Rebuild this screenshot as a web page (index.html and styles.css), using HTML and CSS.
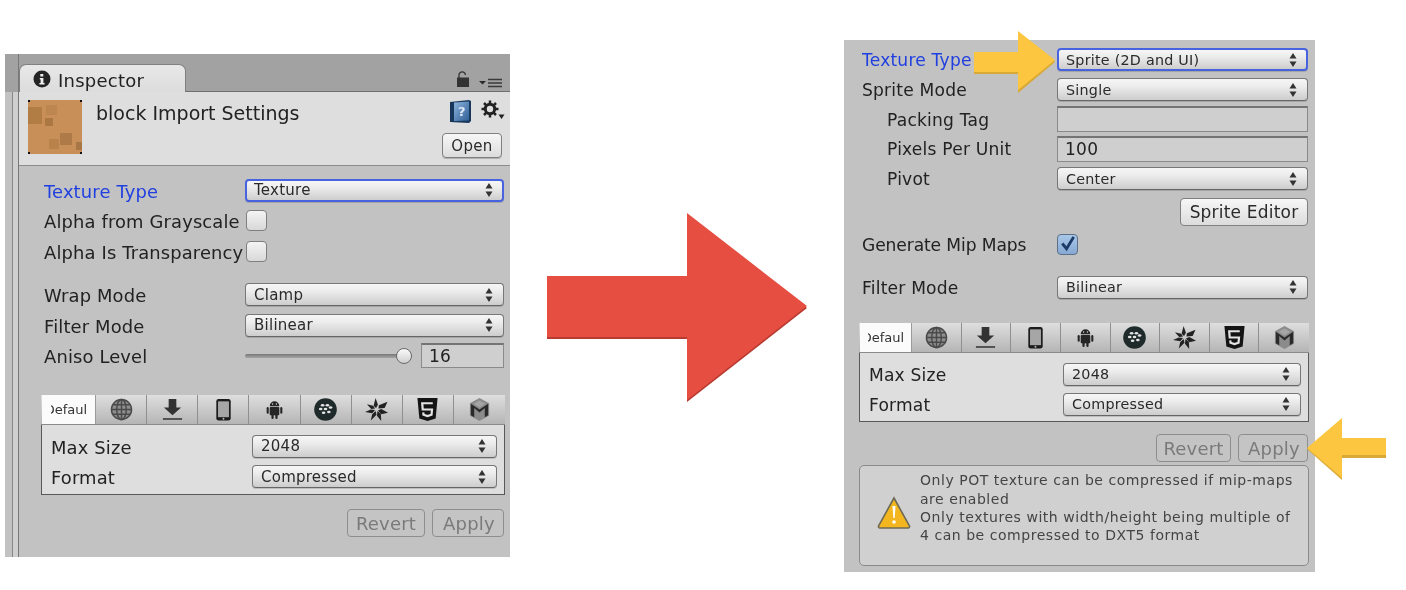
FILE: index.html
```html
<!DOCTYPE html>
<html lang="en">
<head>
<meta charset="utf-8">
<title>Inspector import settings</title>
<link rel="stylesheet" href="styles.css">
</head>
<body>
<svg class="defs" width="0" height="0" aria-hidden="true">
  <defs>
    <linearGradient id="bookfill" x1="0" y1="0" x2="1" y2="1"><stop offset="0" stop-color="#8db4dc"/><stop offset="1" stop-color="#2f5f97"/></linearGradient>
  </defs>
  <symbol id="i-updown" viewBox="0 0 8 14"><path d="M4 0 7.5 5.500H.5zM4 14 .5 8.500h7z" fill="#333"/></symbol>
  <symbol id="i-globe" viewBox="0 0 24 24"><g fill="none" stroke="#4a4a4a" stroke-width="1.500"><circle cx="12" cy="12" r="10.500" fill="#8d8d8d"/><ellipse cx="12" cy="12" rx="5" ry="10.500"/><path d="M12 1.500v21M1.500 12h21M3 7h18M3 17h18"/></g></symbol>
  <symbol id="i-down" viewBox="0 0 24 24"><path d="M8 1h8v9h5l-9 8-9-8h5z" fill="#333"/><rect x="2" y="21" width="20" height="1.800" fill="#444"/></symbol>
  <symbol id="i-phone" viewBox="0 0 24 24"><rect x="4.500" y="1" width="15" height="22.500" rx="2.500" fill="#1c1c1c"/><rect x="6.300" y="3.500" width="11.400" height="16.500" fill="#a6a6a6"/><circle cx="12" cy="21.700" r="1" fill="#bbb"/></symbol>
  <symbol id="i-android" viewBox="0 0 24 24"><g fill="#262626"><path d="M7 8.500a5 5 0 0 1 10 0z"/><rect x="7" y="9.500" width="10" height="8.500" rx="1"/><rect x="3.800" y="9.500" width="2.200" height="7" rx="1.100"/><rect x="18" y="9.500" width="2.200" height="7" rx="1.100"/><rect x="8.800" y="17" width="2.300" height="5" rx="1.100"/><rect x="12.900" y="17" width="2.300" height="5" rx="1.100"/></g><circle cx="10" cy="6.300" r=".7" fill="#ddd"/><circle cx="14" cy="6.300" r=".7" fill="#ddd"/></symbol>
  <symbol id="i-berry" viewBox="0 0 24 24"><circle cx="12" cy="12" r="11.800" fill="#1f2b2b"/><g fill="#e4e4e4"><ellipse cx="9" cy="7.500" rx="1.900" ry="1.300"/><ellipse cx="14" cy="7.500" rx="1.900" ry="1.300"/><ellipse cx="7" cy="11.500" rx="1.900" ry="1.300"/><ellipse cx="12" cy="11.500" rx="1.900" ry="1.300"/><ellipse cx="17.300" cy="10" rx="1.900" ry="1.300"/><ellipse cx="10" cy="15.500" rx="1.900" ry="1.300"/><ellipse cx="15.500" cy="14.500" rx="1.900" ry="1.300"/></g></symbol>
  <symbol id="i-pin" viewBox="0 0 24 24"><g fill="#222"><path d="M11 0 13.500 7 11.500 10.500 9 8z"/><path d="M23.500 4 20.500 10.500 14 11 14.500 7.500z"/><path d="M24 15.500 17 17 13.500 13 17 11.500z"/><path d="M17 24 12.500 18.500 13 13.500 16.500 16.500z"/><path d="M6 23.500 7.500 17 11 13.500 12 17.500z"/><path d="M0 14.500 6 12 10.500 12.500 7.500 16z"/><path d="M2 6.500 8.500 8 10.500 11 6.500 11.500z"/></g></symbol>
  <symbol id="i-html" viewBox="0 0 24 24"><path d="M1.500 0h21l-2 21.500L12 24l-8.500-2.500z" fill="#141414"/><path d="M17.500 5.500h-11l.5 6.500h9.700l-.5 5.500-4.200 1.300-4.200-1.300-.2-2.500" fill="none" stroke="#e4e4e4" stroke-width="2.300"/></symbol>
  <symbol id="i-box" viewBox="0 0 24 24"><path d="M12 0 22 5.500v13L12 24 2 18.500v-13z" fill="#8b8b8b"/><path d="M3 6 12 12l9-6v12l-3.500 2V10.500L12 15 6.500 10.500V20L3 18z" fill="#2a2a2a"/><path d="M6 6 12 2.500 18 6l-6 4z" fill="#a5a5a5"/></symbol>
</svg>

<main class="slide">
  <section class="panel panel-a">
    <div class="side"><div class="side-top"></div><div class="side-bar"></div></div>
    <div class="inspector">
      <header class="tabbar">
        <div class="tab">
          <svg class="info" viewBox="0 0 18 18" width="18" height="18"><circle cx="9" cy="9" r="8.500" fill="#242424"/><path d="M7.300 4h3v2.500h-3zM6.800 8h3.600v5h1.200v1.400H6.400V13h1.200V9.400h-.8z" fill="#eee"/></svg>
          <span class="tab-name">Inspector</span>
        </div>
        <div class="tabbar-tools">
          <svg width="14" height="17" viewBox="0 0 14 17"><path d="M3 7V4a3.200 3.200 0 0 1 6.400 0" fill="none" stroke="#333" stroke-width="1.300"/><rect x="1" y="6.500" width="12" height="9.500" fill="#333"/></svg>
          <svg width="24" height="10" viewBox="0 0 24 10"><path d="M0 3h7L3.500 6.500z" fill="#2b2b2b"/><path d="M9 1.500h14M9 5h14M9 8.500h14" stroke="#3a3a3a" stroke-width="1.400"/></svg>
        </div>
      </header>
      <div class="asset">
        <svg class="thumb" viewBox="0 0 54 54" width="54" height="54">
          <rect width="54" height="54" fill="#c98f58"/>
          <rect x="0" y="7" width="14" height="17" fill="#b27c45"/>
          <rect x="18" y="5" width="11" height="10" fill="#bd8550"/>
          <rect x="17" y="18" width="8" height="8" fill="#ab7743"/>
          <rect x="32" y="33" width="12" height="12" fill="#ad7a48"/>
          <rect x="21" y="39" width="10" height="10" fill="#b9824c"/>
          <rect x="48" y="42" width="6" height="8" fill="#a87746"/>
          <path d="M0 0h2v2H0zM52 0h2v2h-2zM0 52h2v2H0zM52 52h2v2h-2z" fill="#111"/>
        </svg>
        <h1 class="asset-title">block Import Settings</h1>
        <div class="asset-tools">
          <div class="asset-icons">
            <svg width="23" height="24" viewBox="0 0 23 24"><path d="M1 2 20 0l2 1v20l-2 2-19-1z" fill="#17375c"/><path d="M5 2.500 20 1.500v19l-15 .5z" fill="url(#bookfill)"/><text x="9" y="16" class="q">?</text></svg>
            <svg width="24" height="22" viewBox="0 0 24 22"><g fill="none" stroke="#222"><circle cx="9" cy="9" r="4.700" stroke-width="3"/><path d="M9 .5v4M9 13.500v4M.5 9h4M13.500 9h4M3 3l2.800 2.800M12.200 12.200 15 15M3 15l2.800-2.800M12.200 5.800 15 3" stroke-width="2.500"/></g><path d="M17.500 14.500h6l-3 4.500z" fill="#222"/></svg>
          </div>
          <button class="btn btn-open" type="button">Open</button>
        </div>
      </div>
      <div class="body body-a">
        <div class="row is-active"><label class="lbl">Texture Type</label><div class="popup focus"><span>Texture</span><svg class="ud"><use href="#i-updown"/></svg></div></div>
        <div class="row"><label class="lbl">Alpha from Grayscale</label><span class="check"></span></div>
        <div class="row"><label class="lbl">Alpha Is Transparency</label><span class="check"></span></div>
        <div class="spacer-a"></div>
        <div class="row"><label class="lbl">Wrap Mode</label><div class="popup"><span>Clamp</span><svg class="ud"><use href="#i-updown"/></svg></div></div>
        <div class="row"><label class="lbl">Filter Mode</label><div class="popup"><span>Bilinear</span><svg class="ud"><use href="#i-updown"/></svg></div></div>
        <div class="row"><label class="lbl">Aniso Level</label>
          <div class="slider-wrap"><div class="slider"><span class="knob"></span></div><div class="field field-num">16</div></div>
        </div>
        <div class="platforms platforms-a">
          <div class="ptabs">
            <div class="ptab on"><span>Default</span></div>
            <div class="ptab"><svg><use href="#i-globe"/></svg></div>
            <div class="ptab"><svg><use href="#i-down"/></svg></div>
            <div class="ptab"><svg><use href="#i-phone"/></svg></div>
            <div class="ptab"><svg><use href="#i-android"/></svg></div>
            <div class="ptab"><svg><use href="#i-berry"/></svg></div>
            <div class="ptab"><svg><use href="#i-pin"/></svg></div>
            <div class="ptab"><svg><use href="#i-html"/></svg></div>
            <div class="ptab"><svg><use href="#i-box"/></svg></div>
          </div>
          <div class="pbox">
            <div class="prow"><label class="lbl">Max Size</label><div class="popup"><span>2048</span><svg class="ud"><use href="#i-updown"/></svg></div></div>
            <div class="prow"><label class="lbl">Format</label><div class="popup"><span>Compressed</span><svg class="ud"><use href="#i-updown"/></svg></div></div>
          </div>
        </div>
        <div class="actions actions-a">
          <button class="btn btn-dim btn-revert" type="button">Revert</button>
          <button class="btn btn-dim btn-apply" type="button">Apply</button>
        </div>
      </div>
    </div>
  </section>

  <svg class="arrow arrow-red" width="270" height="200" viewBox="0 0 270 200"><path d="M0 65h140V2l120 93L140 189v-63H0z" fill="#b83a30"/><path d="M0 63h140V0l120 93L140 187v-63H0z" fill="#e54e41"/></svg>

  <section class="panel panel-b">
    <div class="body body-b">
      <div class="row is-active"><label class="lbl">Texture Type</label><div class="popup focus"><span>Sprite (2D and UI)</span><svg class="ud"><use href="#i-updown"/></svg></div></div>
      <div class="row"><label class="lbl">Sprite Mode</label><div class="popup"><span>Single</span><svg class="ud"><use href="#i-updown"/></svg></div></div>
      <div class="row"><label class="lbl sub">Packing Tag</label><div class="field"></div></div>
      <div class="row"><label class="lbl sub">Pixels Per Unit</label><div class="field">100</div></div>
      <div class="row"><label class="lbl sub">Pivot</label><div class="popup"><span>Center</span><svg class="ud"><use href="#i-updown"/></svg></div></div>
      <div class="sprite-line"><button class="btn btn-sprite" type="button">Sprite Editor</button></div>
      <div class="row row-mip"><label class="lbl">Generate Mip Maps</label>
        <span class="check checked"><svg width="20" height="20" viewBox="0 0 20 20"><path d="M4.500 9.500 9 15 16.500 2.500" fill="none" stroke="#1d3b68" stroke-width="3"/></svg></span>
      </div>
      <div class="row row-filter"><label class="lbl">Filter Mode</label><div class="popup"><span>Bilinear</span><svg class="ud"><use href="#i-updown"/></svg></div></div>
      <div class="platforms platforms-b">
        <div class="ptabs">
          <div class="ptab on"><span>Default</span></div>
          <div class="ptab"><svg><use href="#i-globe"/></svg></div>
          <div class="ptab"><svg><use href="#i-down"/></svg></div>
          <div class="ptab"><svg><use href="#i-phone"/></svg></div>
          <div class="ptab"><svg><use href="#i-android"/></svg></div>
          <div class="ptab"><svg><use href="#i-berry"/></svg></div>
          <div class="ptab"><svg><use href="#i-pin"/></svg></div>
          <div class="ptab"><svg><use href="#i-html"/></svg></div>
          <div class="ptab"><svg><use href="#i-box"/></svg></div>
        </div>
        <div class="pbox">
          <div class="prow"><label class="lbl">Max Size</label><div class="popup"><span>2048</span><svg class="ud"><use href="#i-updown"/></svg></div></div>
          <div class="prow"><label class="lbl">Format</label><div class="popup"><span>Compressed</span><svg class="ud"><use href="#i-updown"/></svg></div></div>
        </div>
      </div>
      <div class="actions actions-b">
        <button class="btn btn-dim btn-revert" type="button">Revert</button>
        <button class="btn btn-dim btn-apply" type="button">Apply</button>
      </div>
      <div class="help">
        <svg class="warn" width="34" height="34" viewBox="0 0 34 34">
          <path d="M17 2 32.500 30a1.500 1.500 0 0 1-1.300 2H2.800a1.500 1.500 0 0 1-1.300-2z" fill="#f3b61f" stroke="#6f6a55" stroke-width="1.600"/>
          <path d="M15.500 10h3l-.8 12h-1.400z" fill="#fff"/><circle cx="17" cy="26" r="1.800" fill="#fff"/>
        </svg>
        <p class="help-text">Only POT texture can be compressed if mip-maps<br>are enabled<br>Only textures with width/height being multiple of<br>4 can be compressed to DXT5 format</p>
      </div>
    </div>
  </section>

  <svg class="arrow arrow-y1" width="84" height="64" viewBox="0 0 84 64"><path d="M0 23h44V3L81 31 44 62V43H0z" fill="#d9a935"/><path d="M0 21h44V0L81 29 44 59V41H0z" fill="#fdc640"/></svg>
  <svg class="arrow arrow-y2" width="82" height="64" viewBox="0 0 82 64"><path d="M80 22H36V3L1 31l35 31V40h44z" fill="#d9a935"/><path d="M80 20H36V0L1 30l35 30V37h44z" fill="#fdc640"/></svg>
</main>
</body>
</html>
```

FILE: styles.css
```css
* { box-sizing: border-box; }
html, body { margin: 0; padding: 0; background: #fff; }
.defs { position: absolute; }
.slide {
  position: relative;
  width: 1406px;
  height: 590px;
  overflow: hidden;
  background: #fff;
  font-family: "DejaVu Sans", sans-serif;
  color: #222;
}

/* free canvas items */
.panel { position: absolute; background: #c2c2c2; filter: blur(.4px); }
.panel-a { left: 5px; top: 54px; width: 505px; height: 503px; display: flex; }
.panel-b { left: 844px; top: 40px; width: 471px; height: 532px; }
.arrow { position: absolute; display: block; }
.arrow-red { left: 547px; top: 213px; }
.arrow-y1 { left: 974px; top: 31px; }
.arrow-y2 { left: 1306px; top: 418px; }

/* left window */
.side { width: 14px; display: flex; flex-direction: column; border-right: 1px solid #777; }
.side-top { height: 38px; background: #a2a2a2; }
.side-bar { flex: 1; background: linear-gradient(90deg, #c2c2c2 0 7px, #888 7px 8px, #cfcfcf 8px); }
.inspector { flex: 1; min-width: 0; display: flex; flex-direction: column; }
.tabbar {
  height: 38px;
  background: #a2a2a2;
  border-bottom: 1px solid #6f6f6f;
  display: flex;
  justify-content: space-between;
  align-items: flex-end;
}
.tab {
  width: 167px;
  height: 28px;
  margin-bottom: -1px;
  border: 1px solid #808080;
  border-bottom: 0;
  border-radius: 7px 7px 0 0;
  background: linear-gradient(#e8e8e8, #dcdcdc);
  display: flex;
  align-items: center;
  gap: 7px;
  padding: 0 0 0 13px;
  font-size: 18px;
  letter-spacing: .25px;
  color: #222;
}
.tab-name { padding-top: 3px; }
.tabbar-tools { display: flex; align-items: flex-end; gap: 9px; padding: 0 7px 3px 0; }
.asset {
  height: 74px;
  background: #dedede;
  border-bottom: 1px solid #8c8c8c;
  display: flex;
  padding: 8px 8px 0 9px;
}
.thumb { display: block; flex: none; }
.asset-title {
  margin: 1px 0 0 14px;
  flex: 1;
  font-size: 19px;
  line-height: 24px;
  font-weight: 400;
  color: #222;
}
.asset-tools { width: 55px; display: flex; flex-direction: column; align-items: flex-end; }
.asset-icons { display: flex; gap: 9px; margin-right: -3px; margin-left: -4px; }
.asset-icons svg { display: block; }
.q { font: 700 13px "DejaVu Sans", sans-serif; fill: #dfe9f5; }

/* body */
.body { color: #222; }
.body-a { padding: 9px 6px 0 25px; }
.body-b { padding: 5px 7px 0 18px; }
.row {
  height: 30.5px;
  display: flex;
  align-items: center;
}
.body-b .row { height: 29.7px; }
.lbl {
  flex: none;
  width: 202px;
  overflow: hidden;
  white-space: nowrap;
  padding-top: 2px;
  font-size: 17.9px;
  letter-spacing: .15px;
  color: #222;
}
.body-a > .row .lbl { width: 201px; padding-right: 1px; }
.body-b .lbl { width: 195px; padding-top: 1px; font-size: 17.100px; letter-spacing: .2px; }
.body-b .row-mip .lbl { letter-spacing: -.1px; }
.lbl.sub { padding-left: 25px; }
.is-active .lbl { color: #1f3fe0; }
.spacer-a { height: 13px; }

.popup {
  flex: 1;
  min-width: 0;
  height: 23px;
  border: 1px solid #777;
  border-bottom-color: #666;
  border-radius: 4px;
  background: linear-gradient(#f6f6f6 0, #ececec 35%, #cdcdcd 100%);
  box-shadow: 0 1px 0 rgba(0,0,0,.15);
  display: flex;
  align-items: center;
  justify-content: space-between;
  padding: 0 10px 0 8px;
  font-size: 15px;
  letter-spacing: .25px;
  color: #2a2a2a;
}
.body-b .popup { font-size: 14.300px; }
.popup.focus { border: 2px solid #4763e0; padding-left: 7px; padding-right: 9px; }
.ud { width: 8px; height: 14px; flex: none; }

.check {
  flex: none;
  width: 21px;
  height: 21px;
  margin-left: 1px;
  border: 1px solid #7f7f7f;
  border-radius: 4px;
  background: linear-gradient(#f4f4f4, #d8d8d8);
  display: flex;
  align-items: center;
  justify-content: center;
}
.check.checked { background: linear-gradient(#a9c7e8, #86a9d3); border-color: #5e6f88; margin-left: 0; }
.check svg { display: block; }

.field {
  flex: 1;
  height: 26px;
  border: 1px solid #8a8a8a;
  border-top: 2px solid #747474;
  background: #cfcfcf;
  display: flex;
  align-items: center;
  padding: 0 8px 0 7px;
  font-size: 17px;
  letter-spacing: .3px;
  color: #222;
}
.slider-wrap { flex: 1; display: flex; align-items: center; gap: 9px; }
.slider {
  position: relative;
  width: 167px;
  height: 4px;
  border-radius: 2px;
  background: linear-gradient(#777, #a5a5a5);
}
.knob {
  position: absolute;
  right: 0;
  top: -6px;
  width: 16px;
  height: 16px;
  border-radius: 50%;
  border: 1px solid #6a6a6a;
  background: linear-gradient(#fafafa, #cfcfcf);
}
.field-num { flex: none; width: 83px; height: 25px; }

.sprite-line { display: flex; justify-content: flex-end; margin-top: 5px; }
.row-mip { margin-top: 3px; }
.body-b .row-mip { height: 30px; }
.body-b .row-filter { height: 30px; margin-top: 13px; }

/* platform tabs */
.platforms-a { margin: 24px -1px 0 -3px; }
.platforms-b { margin: 21px 0 0 -3px; width: 450px; }
.ptabs {
  height: 30px;
  display: grid;
  background: linear-gradient(#dedede, #b5b5b5);
  border-bottom: 1px solid #8a8a8a;
}
.platforms-a .ptabs { grid-template-columns: 55px repeat(8, 1fr); }
.platforms-b .ptabs { grid-template-columns: 53px repeat(8, 1fr); }
.ptab {
  min-width: 0;
  overflow: hidden;
  display: flex;
  align-items: center;
  justify-content: center;
  border-right: 1px solid #8f8f8f;
}
.ptab:last-child { border-right: 0; }
.ptab svg { width: 23px; height: 23px; flex: none; }
.ptab.on { background: #fbfbfb; margin-left: 1px; border-right-color: #9a9a9a; }
.ptab.on span {
  flex: none;
  width: 36px;
  overflow: hidden;
  display: flex;
  justify-content: center;
  white-space: nowrap;
  font-size: 13px;
  color: #333;
}
.pbox {
  background: #dedede;
  border: 1px solid #585858;
  border-top: 0;
  padding: 6px 7px 2px 9px;
}
.platforms-b .pbox { padding-top: 6px; padding-bottom: 2px; }
.prow { height: 30.500px; display: flex; align-items: center; }
.platforms-b .prow { height: 30px; }
.platforms-a .lbl { width: 201px; }
.platforms-b .lbl { width: 194px; }

/* buttons */
.btn {
  font-family: inherit;
  border: 1px solid #808080;
  border-radius: 4px;
  padding: 0;
  color: #2a2a2a;
  background: linear-gradient(#f7f7f7, #dcdcdc);
}
.btn-open { width: 60px; height: 25px; margin-top: 9px; font-size: 15px; letter-spacing: .3px; box-shadow: 0 1px 0 rgba(0,0,0,.2); }
.btn-sprite { width: 128px; height: 28px; font-size: 17px; letter-spacing: .2px; }
.btn-dim {
  height: 28px;
  font-size: 18px;
  letter-spacing: .2px;
  color: #7a7a7a;
  background: #c4c4c4;
  border-color: #8e8e8e;
}
.actions { display: flex; justify-content: flex-end; gap: 7px; }
.actions-a { margin-top: 14px; }
.actions-b { margin-top: 12px; }
.btn-revert { width: 78px; }
.btn-apply { width: 72px; padding-left: 2px; }
.actions-b .btn-revert { width: 75px; }
.actions-b .btn-apply { width: 70px; }

/* help */
.help {
  margin: 3px 0 0 -3px;
  width: 450px;
  height: 101px;
  border: 1px solid #8a8a8a;
  border-radius: 5px;
  background: #d0d0d0;
  display: flex;
  align-items: flex-start;
  padding: 5px 0 0 17px;
}
.warn { flex: none; margin-top: 25px; }
.help-text {
  margin: 0 0 0 9px;
  font-size: 14px;
  line-height: 18.200px;
  letter-spacing: .54px;
  color: #444;
  white-space: nowrap;
}
```
